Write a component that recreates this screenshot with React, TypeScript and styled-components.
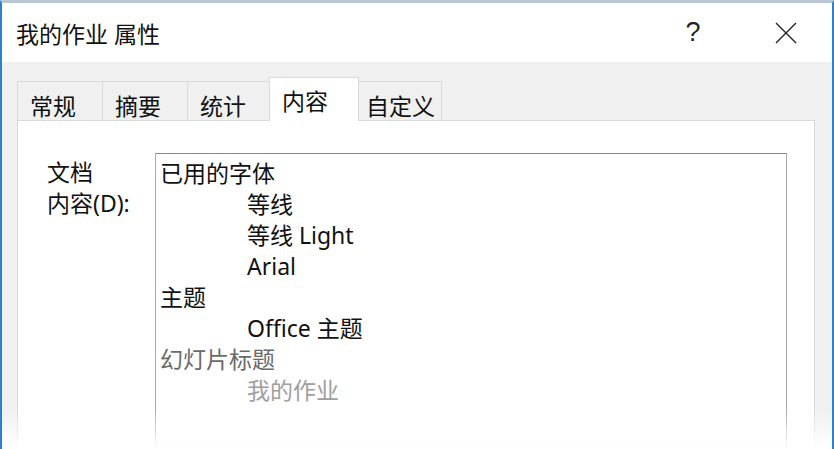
import React from 'react';
import styled, { createGlobalStyle } from 'styled-components';

const Global = createGlobalStyle`
  html, body { margin: 0; padding: 0; background: #fff; }
  body { font-family: "Noto Sans", "Noto Sans CJK SC", sans-serif; }
`;

const Window = styled.div`
  position: relative;
  width: 834px;
  height: 449px;
  box-sizing: border-box;
  border-top: 3px solid #b9c6d3;
  border-left: 2px solid #2f7fcf;
  border-right: 2px solid #2f7fcf;
  display: flex;
  flex-direction: column;
  overflow: hidden;
  background: #f0f0f0;
  color: #1a1a1a;
`;

const TitleBar = styled.div`
  height: 59px;
  flex: none;
  background: #fff;
  display: flex;
  align-items: center;
  padding-left: 14px;
`;

const Title = styled.div`
  flex: 1;
  font-size: 23px;
  color: #111;
`;

const CaptionButton = styled.div<{ $mr?: number }>`
  width: 60px;
  height: 59px;
  display: flex;
  align-items: center;
  justify-content: center;
  margin-right: ${(p) => p.$mr ?? 0}px;
  font-family: "Liberation Sans", sans-serif;
  font-size: 27px;
  color: #222;
`;

const Body = styled.div`
  flex: 1;
  display: flex;
  flex-direction: column;
  padding: 15px 17px 0 15px;
  min-height: 0;
`;

const TabRow = styled.div`
  display: flex;
  align-items: flex-end;
  height: 44px;
  margin-bottom: -1px;
  position: relative;
  z-index: 1;
`;

const Tab = styled.div<{ $w: number; $active?: boolean; $pl?: number }>`
  box-sizing: border-box;
  width: ${(p) => p.$w}px;
  height: ${(p) => (p.$active ? 44 : 40)}px;
  margin-left: -1px;
  border: 1px solid #d9d9d9;
  border-bottom: ${(p) => (p.$active ? 'none' : '1px solid #d9d9d9')};
  background: ${(p) => (p.$active ? '#fff' : '#f0f0f0')};
  display: flex;
  align-items: center;
  padding-left: ${(p) => p.$pl ?? 12}px;
  padding-top: ${(p) => (p.$active ? 1 : 7)}px;
  font-size: 23px;
  color: #111;
  &:first-child { margin-left: 0; }
`;

const Panel = styled.div`
  flex: 1;
  background: #fff;
  border: 1px solid #d9d9d9;
  display: flex;
  padding: 32px 27px 0 29px;
  min-height: 0;
`;

const Label = styled.div`
  width: 108px;
  flex: none;
  font-size: 23px;
  line-height: 31px;
  padding-top: 4px;
  color: #111;
`;

const ListBox = styled.div`
  flex: 1;
  border: 1px solid #a8a8a8;
  border-top-color: #8a8a8a;
  padding: 4px 4px;
`;

const Item = styled.div<{ $level?: number; $tone?: 'normal' | 'dim' | 'faint' }>`
  font-size: 23px;
  line-height: 31px;
  padding-left: ${(p) => (p.$level ?? 0) * 87}px;
  white-space: nowrap;
  color: ${(p) => (p.$tone === 'dim' ? '#6a6a6a' : p.$tone === 'faint' ? '#9e9e9e' : '#111')};
`;

const Fade = styled.div`
  position: absolute;
  left: 0;
  right: 0;
  bottom: 0;
  height: 40px;
  background: linear-gradient(to bottom, rgba(255, 255, 255, 0), #fff);
  pointer-events: none;
`;

const CloseIcon = () => (
  <svg width="22" height="22" viewBox="0 0 22 22">
    <path d="M1 1 L21 21 M21 1 L1 21" stroke="#222" strokeWidth="1.4" fill="none" />
  </svg>
);

const tabs = [
  { label: '常规', w: 86 },
  { label: '摘要', w: 86 },
  { label: '统计', w: 83 },
  { label: '内容', w: 90, active: true },
  { label: '自定义', w: 84, pl: 7 },
];

const items: { text: string; level?: number; tone?: 'normal' | 'dim' | 'faint' }[] = [
  { text: '已用的字体' },
  { text: '等线', level: 1 },
  { text: '等线 Light', level: 1 },
  { text: 'Arial', level: 1 },
  { text: '主题' },
  { text: 'Office 主题', level: 1 },
  { text: '幻灯片标题', tone: 'dim' },
  { text: '我的作业', level: 1, tone: 'faint' },
];

export default function App() {
  return (
    <>
      <Global />
      <Window>
        <TitleBar>
          <Title>我的作业 属性</Title>
          <CaptionButton $mr={33}>?</CaptionButton>
          <CaptionButton $mr={16}>
            <CloseIcon />
          </CaptionButton>
        </TitleBar>
        <Body>
          <TabRow>
            {tabs.map((t) => (
              <Tab key={t.label} $w={t.w} $active={t.active} $pl={t.pl}>
                {t.label}
              </Tab>
            ))}
          </TabRow>
          <Panel>
            <Label>
              文档
              <br />
              内容(D):
            </Label>
            <ListBox>
              {items.map((it, i) => (
                <Item key={i} $level={it.level} $tone={it.tone}>
                  {it.text}
                </Item>
              ))}
            </ListBox>
          </Panel>
        </Body>
        <Fade />
      </Window>
    </>
  );
}
